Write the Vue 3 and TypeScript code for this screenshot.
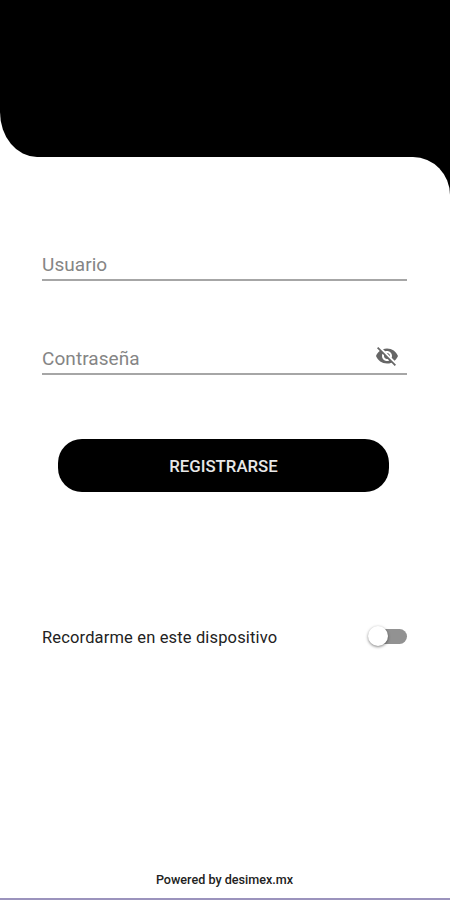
<script setup lang="ts">
import { ref } from 'vue'

const user = ref('')
const password = ref('')
const showPassword = ref(false)
const remember = ref(false)
</script>

<template>
  <main class="screen">
    <div class="top"><div class="banner"></div></div>
    <form class="card" @submit.prevent>
      <div class="field">
        <input v-model="user" class="input user" type="text" placeholder="Usuario" />
      </div>
      <div class="field second">
        <input v-model="password" class="input" :type="showPassword ? 'text' : 'password'" placeholder="Contraseña" />
        <button class="eye" type="button" @click="showPassword = !showPassword">
          <svg width="24" height="24" viewBox="0 0 24 24">
            <path d="M12 7c2.76 0 5 2.24 5 5 0 .65-.13 1.26-.36 1.83l2.92 2.92c1.51-1.26 2.7-2.89 3.43-4.75-1.73-4.39-6-7.5-11-7.5-1.4 0-2.74.25-3.98.7l2.16 2.16C10.74 7.13 11.35 7 12 7zM2 4.27l2.28 2.28.46.46C3.08 8.3 1.78 10.02 1 12c1.73 4.39 6 7.5 11 7.5 1.55 0 3.03-.3 4.38-.84l.42.42L19.73 22 21 20.73 3.27 3 2 4.27zM7.53 9.8l1.55 1.55c-.05.21-.08.43-.08.65 0 1.66 1.34 3 3 3 .22 0 .44-.03.65-.08l1.55 1.55c-.67.33-1.41.53-2.2.53-2.76 0-5-2.24-5-5 0-.79.2-1.53.53-2.2zm4.31-.78l3.15 3.15.02-.16c0-1.66-1.34-3-3-3l-.17.01z" />
          </svg>
        </button>
      </div>
      <button class="submit" type="submit">REGISTRARSE</button>
      <label class="remember">
        <span class="caption">Recordarme en este dispositivo</span>
        <input v-model="remember" class="check" type="checkbox" />
        <span class="track"><span class="thumb"></span></span>
      </label>
      <footer class="footer">Powered by desimex.mx</footer>
    </form>
  </main>
</template>

<style>
body {
  margin: 0;
}
</style>

<style scoped>
.screen {
  box-sizing: border-box;
  display: flex;
  flex-direction: column;
  height: 900px;
  overflow: hidden;
  background: linear-gradient(#fff 157px, #000 157px, #000 240px, #fff 240px);
  border-bottom: 2px solid #9b93bd;
  font-family: Roboto, "Liberation Sans", sans-serif;
}
.top {
  height: 157px;
  flex: none;
  background: #fff;
}
.banner {
  height: 157px;
  background: #000;
  border-bottom-left-radius: 37px 45px;
}
.card {
  box-sizing: border-box;
  flex: 1;
  display: flex;
  flex-direction: column;
  padding: 90px 43px 0 42px;
  background: #fff;
  border-top-right-radius: 37px 38px;
}
.field {
  box-sizing: border-box;
  display: flex;
  align-items: center;
  flex: none;
  height: 34px;
  border-bottom: 2px solid #a6a6a6;
}
.second {
  margin-top: 60px;
}
.input {
  flex: 1;
  min-width: 0;
  padding: 3px 0 0;
  border: 0;
  outline: 0;
  background: none;
  color: #333;
  font: 400 19px/24px Roboto, sans-serif;
  letter-spacing: 0.06px;
}
.input::placeholder {
  color: #858585;
  opacity: 1;
}
.eye {
  display: flex;
  margin: 0 8px 2px 0;
  padding: 0;
  border: 0;
  background: none;
  fill: #666;
}
.submit {
  flex: none;
  height: 53px;
  margin: 64px 18px 0 16px;
  padding: 1px 0 0;
  border: 0;
  border-radius: 24px;
  background: #000;
  color: #e8e8e8;
  font: 500 16.8px/52px Roboto, sans-serif;
}
.remember {
  display: flex;
  align-items: center;
  justify-content: space-between;
  height: 24px;
  margin-top: 132px;
}
.caption {
  padding-top: 2px;
  color: #222;
  font-size: 16.5px;
  letter-spacing: 0.15px;
  white-space: nowrap;
}
.check {
  display: none;
}
.track {
  display: flex;
  align-items: center;
  width: 36px;
  height: 15px;
  border-radius: 8px;
  background: #929292;
}
.thumb {
  width: 20px;
  height: 20px;
  margin-left: -3px;
  flex: none;
  border-radius: 50%;
  background: #fff;
  box-shadow: 0 1px 3px rgba(0, 0, 0, 0.5);
}
.check:checked + .track {
  justify-content: flex-end;
}
.footer {
  margin-top: 224px;
  color: #222;
  font-size: 12.6px;
  font-weight: 500;
  line-height: 16px;
  text-align: center;
}
</style>
